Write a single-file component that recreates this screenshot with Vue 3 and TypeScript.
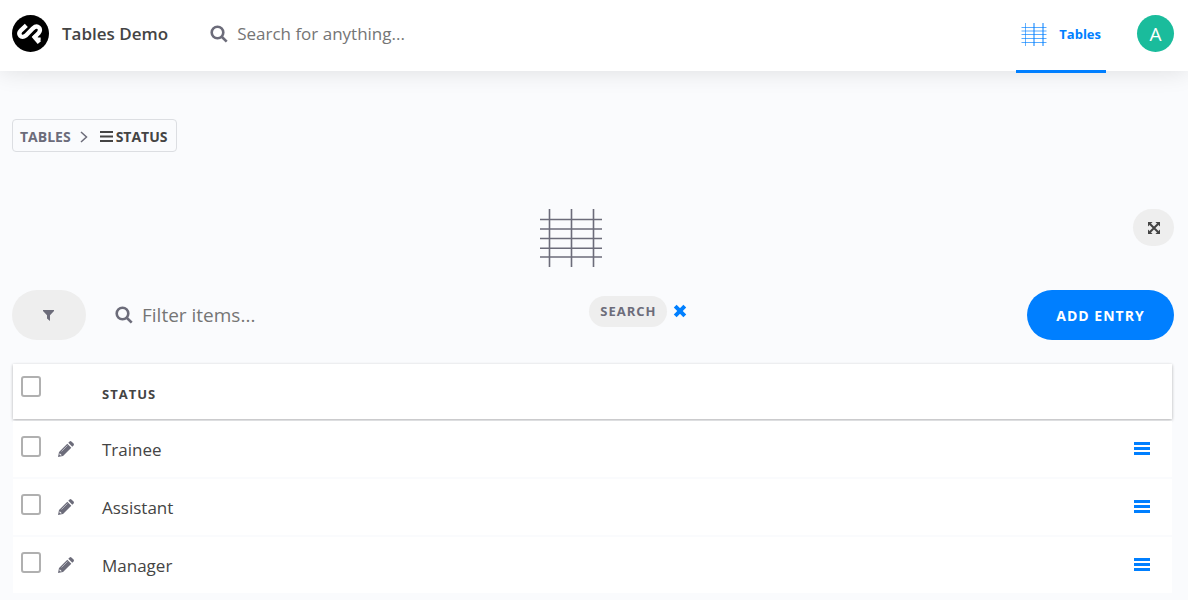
<script setup lang="ts">
import { ref } from 'vue'

interface Entry {
  id: number
  status: string
}

const entries = ref<Entry[]>([
  { id: 1, status: 'Trainee' },
  { id: 2, status: 'Assistant' },
  { id: 3, status: 'Manager' },
])
const search = ref('')
const filter = ref('')
const selected = ref<number[]>([])

function toggleAll(event: Event) {
  const on = (event.target as HTMLInputElement).checked
  selected.value = on ? entries.value.map((e) => e.id) : []
}
</script>

<template>
  <div class="page">
    <header class="topbar">
      <a class="brand" href="#">
        <svg class="logo" viewBox="0 0 111 111" aria-hidden="true">
          <circle cx="55.5" cy="55.5" r="55.5" fill="#000" />
          <g fill="none" stroke="#fff" stroke-width="13" stroke-linejoin="round">
            <path d="M43 31 L27 46 C15 58 28 73 41 62 L63 40 C77 27 91 42 80 54 L65 69" />
            <path d="M64 62 L82 83" />
            <path d="M70 72 L86 72" stroke-width="9" />
          </g>
        </svg>
        <span>Tables Demo</span>
      </a>
      <label class="field">
        <svg class="lens" viewBox="0 0 18 18" aria-hidden="true">
          <circle cx="7.5" cy="7.5" r="5.8" /><path d="M12 12l4.7 4.7" />
        </svg>
        <input v-model="search" type="text" placeholder="Search for anything..." aria-label="Search for anything" />
      </label>
      <nav class="nav">
        <a class="tab" href="#">
          <svg class="tab-grid" viewBox="0 0 25 23" aria-hidden="true">
            <path d="M0 4.5h25M0 8h25M0 11.5h25M0 15.5h25M0 19.5h25" opacity=".65" />
            <path d="M4 0v23" opacity=".6" /><path d="M12.5 0v23M21.5 0v23" />
          </svg>
          <span>Tables</span>
        </a>
        <button class="avatar" type="button" aria-label="Account">A</button>
      </nav>
    </header>

    <main class="content">
      <nav class="crumbs" aria-label="Breadcrumb">
        <a href="#">TABLES</a>
        <svg class="chevron" viewBox="0 0 8 12" aria-hidden="true"><path d="M1 1l5.5 5L1 11" /></svg>
        <a class="current" href="#">
          <svg class="crumb-bars" viewBox="0 0 13 11" aria-hidden="true"><path d="M0 1h13M0 5.5h13M0 10h13" /></svg>
          STATUS
        </a>
      </nav>

      <div class="hero">
        <svg class="hero-grid" viewBox="0 0 62 58" aria-hidden="true">
          <path d="M0 10.5h62M0 20h62M0 29.5h62M0 39.2h62M0 48h62M9.5 0v58M31.5 0v58M53.5 0v58" />
        </svg>
        <button class="expand" type="button" aria-label="Full screen">
          <svg viewBox="0 0 12 12" aria-hidden="true">
            <path d="M2 2l8 8M10 2l-8 8" stroke="currentColor" stroke-width="2" />
            <path d="M0 0h4.6L0 4.6zM12 0v4.6L7.4 0zM0 12V7.4L4.6 12zM12 12H7.4L12 7.4z" fill="currentColor" />
          </svg>
        </button>
      </div>

      <div class="tools">
        <button class="funnel" type="button" aria-label="Filters">
          <svg viewBox="0 0 12 11" aria-hidden="true"><path d="M0 0h11v1L7 5.300V11L4 8.500V5.300L0 1z" /></svg>
        </button>
        <label class="field filter">
          <svg class="lens" viewBox="0 0 18 18" aria-hidden="true">
            <circle cx="7.5" cy="7.5" r="5.8" /><path d="M12 12l4.7 4.7" />
          </svg>
          <input v-model="filter" type="text" placeholder="Filter items..." aria-label="Filter items" />
        </label>
        <div class="search-actions">
          <button class="search" type="button">SEARCH</button>
          <button class="clear" type="button" aria-label="Clear search" @click="filter = ''">
            <svg viewBox="0 0 14 14" aria-hidden="true"><path d="M2.200 2.200l9.600 9.600M11.800 2.200l-9.600 9.600" /></svg>
          </button>
        </div>
        <button class="add" type="button">ADD ENTRY</button>
      </div>

      <table class="entries">
        <thead>
          <tr>
            <th class="check"><input type="checkbox" aria-label="Select all" @change="toggleAll" /></th>
            <th class="edit"></th>
            <th class="name" scope="col">STATUS</th>
            <th class="menu"></th>
          </tr>
        </thead>
        <tbody>
          <tr v-for="entry in entries" :key="entry.id">
            <td class="check">
              <input v-model="selected" type="checkbox" :value="entry.id" :aria-label="'Select ' + entry.status" />
            </td>
            <td class="edit">
              <button type="button" :aria-label="'Edit ' + entry.status">
                <svg viewBox="0 0 16 16" aria-hidden="true">
                  <path d="M0 16l1-5L9.300 2.700l4 4L5 15zM10.300 1.700L11.600.4q.9-.7 1.800 0l2.200 2.200q.7.9 0 1.800L14.300 5.700z" fill="#6c6c7a" />
                  <path d="M3.500 10.500l6-6" stroke="#c3c3cc" stroke-width=".8" />
                  <path d="M1.700 12.200l2.100 2.100-1.200.3-1.200-1.200z" fill="#fff" />
                </svg>
              </button>
            </td>
            <td class="name">{{ entry.status }}</td>
            <td class="menu">
              <button type="button" :aria-label="'Actions for ' + entry.status">
                <svg viewBox="0 0 16 13" aria-hidden="true"><path d="M0 1.500h16M0 6.500h16M0 11.500h16" /></svg>
              </button>
            </td>
          </tr>
        </tbody>
      </table>
    </main>
  </div>
</template>

<style>
body {
  background: #fafbfd;
}
</style>

<style scoped>
.page {
  font-family: "Open Sans", "Noto Sans", sans-serif;
  color: #444;
}
.page * {
  box-sizing: border-box;
}
button {
  padding: 0;
  border: 0;
  background: none;
  font: inherit;
  color: inherit;
  cursor: pointer;
}
a {
  color: inherit;
  text-decoration: none;
}
svg {
  display: block;
  flex: none;
}
.topbar {
  display: flex;
  align-items: center;
  height: 71px;
  padding: 0 14px 4px 12px;
  background: #fff;
  box-shadow: 0 0 24px rgba(0, 0, 0, 0.12);
}
.brand {
  display: flex;
  align-items: center;
  gap: 13px;
  font-size: 17px;
  font-weight: 600;
}
.logo {
  width: 37px;
  height: 37px;
}
.field {
  display: flex;
  align-items: center;
  gap: 9px;
  flex: 1;
  margin-left: 42px;
}
.lens {
  width: 18px;
  height: 18px;
  fill: none;
  stroke: #6c6c7a;
  stroke-width: 2.6;
}
.field input {
  flex: 1;
  min-width: 0;
  padding: 0;
  border: 0;
  outline: 0;
  background: none;
  font: inherit;
  font-size: 17px;
  color: #444;
}
.field input::placeholder {
  color: #757575;
  opacity: 1;
}
.nav {
  display: flex;
  align-items: center;
  gap: 31px;
}
.tab {
  display: flex;
  align-items: center;
  gap: 12px;
  height: 75px;
  margin-bottom: -4px;
  padding: 0 5px;
  border-bottom: 3px solid #007fff;
  font-size: 13px;
  font-weight: 700;
  color: #007fff;
}
.tab-grid {
  width: 26px;
  height: 23px;
  stroke: #007fff;
}
.avatar {
  width: 37px;
  height: 37px;
  border-radius: 50%;
  background: #1abc9c;
  color: #fff;
  font-size: 19px;
}
.content {
  padding: 48px 14px 0 12px;
}
.crumbs {
  display: inline-flex;
  align-items: center;
  height: 33px;
  padding: 2px 8px 0 7px;
  border: 1px solid #dcdee2;
  border-radius: 4px;
  font-size: 14px;
  font-weight: 700;
  color: #6c6c7a;
}
.chevron {
  width: 8px;
  height: 12px;
  margin: 0 12px 0 9px;
  fill: none;
  stroke: #6c6c7a;
  stroke-width: 1.5;
}
.current {
  display: flex;
  align-items: center;
  gap: 3px;
  color: #444;
}
.crumb-bars {
  width: 13px;
  height: 11px;
  stroke: #444;
  stroke-width: 2;
}
.hero {
  display: grid;
  grid-template-columns: 12fr 62px 13fr;
  margin-top: 57px;
}
.hero-grid {
  grid-column: 2;
  width: 62px;
  height: 58px;
  stroke: #6c6c7a;
  stroke-width: 1.6;
}
.expand {
  display: grid;
  place-items: center;
  justify-self: end;
  width: 41px;
  height: 37px;
  border-radius: 20px;
  background: #eee;
}
.expand svg {
  width: 12px;
  height: 12px;
}
.tools {
  display: flex;
  align-items: center;
  height: 50px;
  margin-top: 23px;
}
.funnel {
  display: grid;
  place-items: center;
  width: 74px;
  height: 50px;
  border-radius: 25px;
  background: #eee;
}
.funnel svg {
  width: 12px;
  height: 11px;
  fill: #6c6c7a;
}
.filter {
  flex: 13;
  margin-left: 29px;
}
.filter input {
  font-size: 19px;
}
.search-actions {
  display: flex;
  align-items: center;
  gap: 6px;
  flex: 12;
  padding-bottom: 8px;
}
.search {
  height: 31px;
  padding: 0 11px;
  border-radius: 16px;
  background: #eee;
  color: #6c6c7a;
  font-size: 13px;
  font-weight: 700;
  letter-spacing: 1px;
}
.clear svg {
  width: 14px;
  height: 14px;
  stroke: #007fff;
  stroke-width: 4;
}
.add {
  width: 147px;
  height: 50px;
  border-radius: 25px;
  background: #007fff;
  color: #fff;
  font-size: 14px;
  font-weight: 700;
  letter-spacing: 1px;
}
.entries {
  width: calc(100% - 3px);
  margin: 22px 0 0 1px;
  border-collapse: separate;
  border-spacing: 0 2px;
  table-layout: fixed;
}
.entries tr {
  height: 56px;
  background: #fff;
}
.entries thead tr {
  height: 55px;
  box-shadow: 0 1px 3px rgba(0, 0, 0, 0.3);
}
.entries th,
.entries td {
  padding: 0;
  text-align: left;
  vertical-align: middle;
}
.entries .check {
  width: 45px;
  padding: 0 0 6px 8px;
}
.entries thead .check {
  padding-bottom: 10px;
}
.check input {
  display: block;
  appearance: none;
  width: 20px;
  height: 21px;
  margin: 0;
  border: 2px solid #b0b0b0;
  border-radius: 3px;
  background: #fff;
}
.check input:checked {
  background: #007fff;
}
.entries .edit {
  width: 44px;
}
.entries td.edit {
  padding-top: 3px;
}
.edit svg {
  width: 16px;
  height: 16px;
}
.entries td.name {
  font-size: 17px;
}
.entries th.name {
  padding-top: 5px;
  font-size: 13px;
  letter-spacing: 1px;
}
.entries .menu {
  width: 38px;
}
.menu svg {
  width: 16px;
  height: 13px;
  stroke: #007fff;
  stroke-width: 3;
}
</style>
